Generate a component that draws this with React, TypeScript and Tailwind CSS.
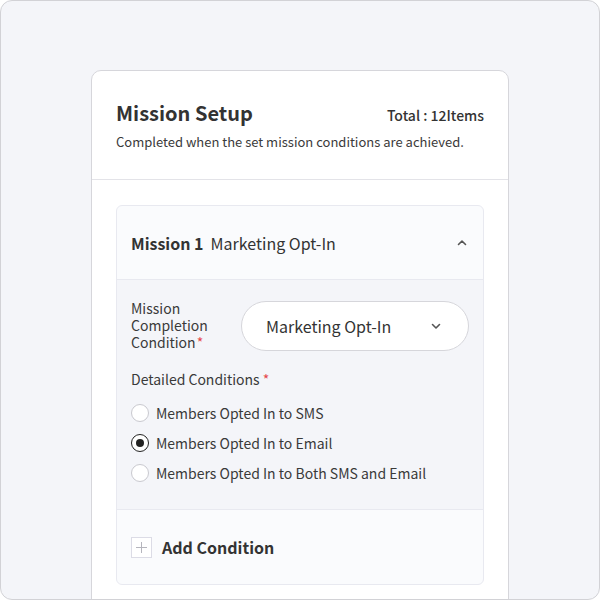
import React from "react";

function ChevronUp() {
  return (
    <svg width="12" height="12" viewBox="0 0 12 12" fill="none">
      <path d="M2.5 7.5L6 4l3.5 3.5" stroke="#555" strokeWidth="1.6" strokeLinecap="round" strokeLinejoin="round" />
    </svg>
  );
}

function ChevronDown() {
  return (
    <svg width="12" height="12" viewBox="0 0 12 12" fill="none">
      <path d="M2.5 4.5L6 8l3.5-3.5" stroke="#555" strokeWidth="1.6" strokeLinecap="round" strokeLinejoin="round" />
    </svg>
  );
}

function Radio({ checked, label }: { checked?: boolean; label: string }) {
  return (
    <label className="flex items-center gap-[7px] h-[20px]">
      <span
        className={
          checked
            ? "w-[18px] h-[18px] rounded-full border-[1.5px] border-[#222] bg-white flex items-center justify-center"
            : "w-[18px] h-[18px] rounded-full border border-[#c9c9cf] bg-white"
        }
      >
        {checked && <span className="w-[8px] h-[8px] rounded-full bg-[#222]" />}
      </span>
      <span className="text-[14px] text-[#3a3a3a]">{label}</span>
    </label>
  );
}

export default function App() {
  return (
    <div
      className="w-[600px] h-[600px] bg-[#f4f5f9] border border-[#d2d2d6] rounded-[12px] overflow-hidden pt-[69px] pl-[90px]"
      style={{ fontFamily: '"Noto Sans CJK KR", "Noto Sans", sans-serif' }}
    >
      <div className="w-[418px] h-[560px] bg-white border border-[#d6d6db] rounded-[10px] flex flex-col">
        <div className="px-[24px] pt-[27px] pb-[27px] border-b border-[#e3e3e8]">
          <div className="flex items-center justify-between h-[30px]">
            <h1 className="text-[20px] font-bold text-[#333] leading-none">Mission Setup</h1>
            <span className="text-[14px] font-medium text-[#333] leading-none mt-[3px]">Total : 12Items</span>
          </div>
          <p className="text-[13px] text-[#3a3a3a] mt-[4px] leading-[20px] whitespace-nowrap">
            Completed when the set mission conditions are achieved.
          </p>
        </div>

        <div className="px-[24px] pt-[25px]">
          <div className="border border-[#e8e9f0] rounded-[6px] bg-[#fafbfd] overflow-hidden">
            <div className="h-[74px] flex items-center justify-between pl-[14px] pr-[15px] border-b border-[#e8e9f0]">
              <div className="flex items-center gap-[7px] text-[16px] text-[#333]">
                <span className="font-bold">Mission 1</span>
                <span>Marketing Opt-In</span>
              </div>
              <ChevronUp />
            </div>

            <div className="bg-[#f4f5f9] px-[14px] pt-[20px] pb-[26px] border-b border-[#e8e9f0]">
              <div className="flex items-center gap-[12px]">
                <div className="w-[98px] text-[14px] leading-[17px] text-[#3a3a3a]">
                  Mission Completion Condition<span className="text-[#e5484d] ml-[1px]">*</span>
                </div>
                <div className="w-[228px] h-[50px] rounded-full bg-white border border-[#d6d6db] flex items-center justify-between pl-[24px] pr-[26px]">
                  <span className="text-[16px] text-[#333]">Marketing Opt-In</span>
                  <ChevronDown />
                </div>
              </div>

              <div className="mt-[18px] text-[14px] text-[#3a3a3a] leading-[20px]">
                Detailed Conditions<span className="text-[#e5484d] ml-[3px]">*</span>
              </div>

              <div className="mt-[14px] flex flex-col gap-[10px]">
                <Radio label="Members Opted In to SMS" />
                <Radio checked label="Members Opted In to Email" />
                <Radio label="Members Opted In to Both SMS and Email" />
              </div>
            </div>

            <div className="h-[74px] flex items-center pl-[14px] gap-[10px]">
              <span className="w-[21px] h-[21px] border border-[#dcdce6] bg-white flex items-center justify-center">
                <svg width="13" height="13" viewBox="0 0 13 13">
                  <path d="M6.5 1v11M1 6.5h11" stroke="#b5b5bd" strokeWidth="1" />
                </svg>
              </span>
              <span className="text-[16px] font-bold text-[#333]">Add Condition</span>
            </div>
          </div>
        </div>
      </div>
    </div>
  );
}
